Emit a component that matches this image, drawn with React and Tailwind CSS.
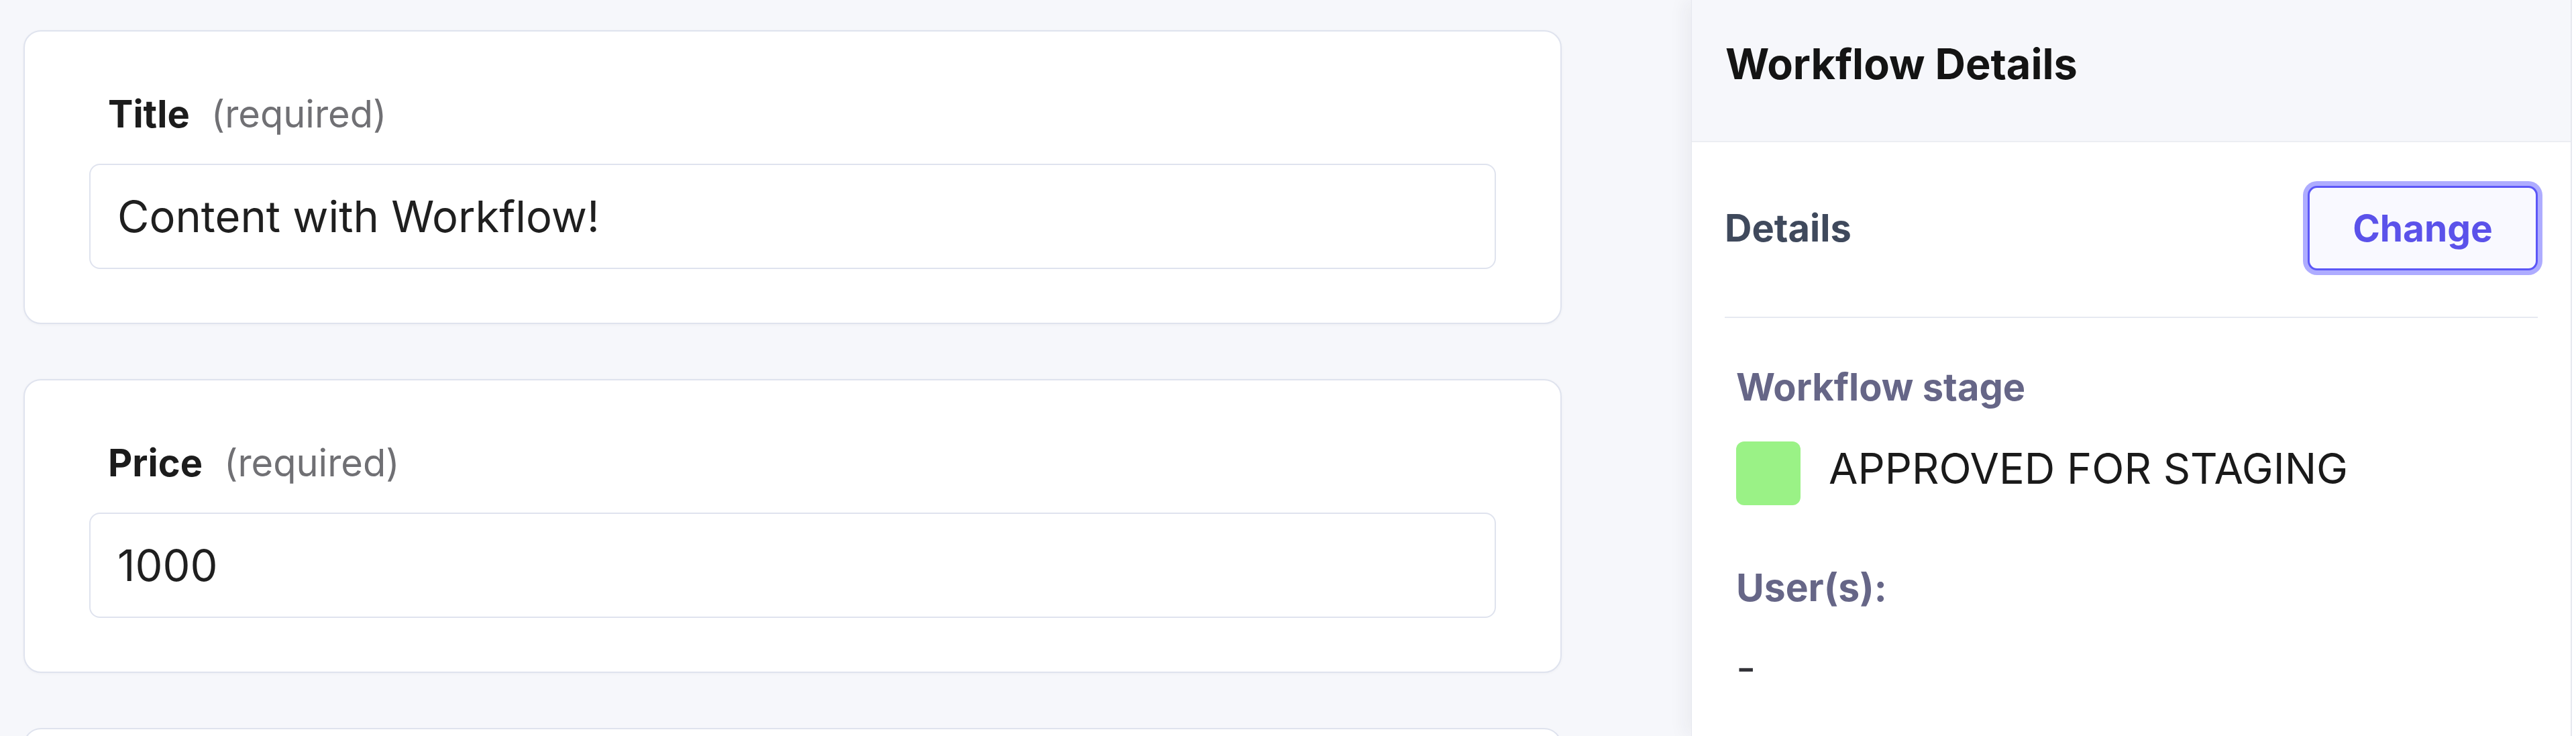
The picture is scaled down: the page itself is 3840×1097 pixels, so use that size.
import React from "react";

function FieldCard({ label, value }) {
  return (
    <div className="w-[2293px] shrink-0 rounded-[26px] border-2 border-[#dfe3ee] bg-white pl-[96px] pr-[96px] pt-[95px] pb-[80px] shadow-[0_1px_4px_rgba(33,33,52,0.04)]">
      <div className="ml-[28px] flex items-baseline leading-none">
        <span className="text-[56px] font-bold text-[#1c1c1c]">{label}</span>
        <span className="ml-[32px] text-[56px] font-normal text-[#707074]">(required)</span>
      </div>
      <div className="mt-[46px] flex h-[157px] items-center rounded-[16px] border-2 border-[#dfe3ee] bg-white pl-[40px]">
        <span className="text-[65px] leading-none text-[#1f1f1f]">{value}</span>
      </div>
    </div>
  );
}

export default function App() {
  return (
    <div className="flex h-[1097px] w-[3840px] overflow-hidden bg-[#f6f7fb] font-[Inter,sans-serif]">
      <div className="flex w-[2521px] shrink-0 flex-col gap-[82px] pl-[35px] pt-[45px]">
        <FieldCard label="Title" value="Content with Workflow!" />
        <FieldCard label="Price" value="1000" />
        <div className="h-[439px] w-[2293px] shrink-0 rounded-[26px] border-2 border-[#dfe3ee] bg-white" />
      </div>
      <div className="flex w-[1313px] shrink-0 flex-col border-l border-r-2 border-[#e6e8ef] bg-white shadow-[-10px_0_24px_rgba(33,33,52,0.05)]">
        <div className="h-[212px] shrink-0 border-b-2 border-[#eceef3] bg-[#f6f7fb] pl-[50px] pt-[64px]">
          <h2 className="text-[63px] font-bold leading-none text-[#141414]">Workflow Details</h2>
        </div>
        <div className="px-[49px] pt-[65px]">
          <div className="flex h-[126px] items-center justify-between">
            <span className="text-[56px] font-bold leading-none text-[#3f495c]">Details</span>
            <button className="flex h-[126px] w-[343px] items-center justify-center rounded-[14px] border-[3px] border-[#5c57f7] bg-[#f9f9ff] ring-[7px] ring-[#aeacff] text-[55px] font-bold leading-none text-[#5b52ea]">
              Change
            </button>
          </div>
          <div className="mt-[69px] h-[2px] bg-[#e6e9f1]" />
          <div className="pl-[17px] pt-[75px]">
            <div className="text-[56px] font-bold leading-none text-[#666687]">Workflow stage</div>
            <div className="mt-[53px] flex items-center">
              <div className="h-[95px] w-[96px] shrink-0 rounded-[12px] bg-[#9af286]" />
              <span className="ml-[42px] -translate-y-[7px] text-[63px] leading-none text-[#1a1a1a]">APPROVED FOR STAGING</span>
            </div>
            <div className="mt-[94px] text-[57px] font-bold leading-none text-[#666687]">User(s):</div>
            <div className="mt-[59px] text-[64px] leading-none text-[#333338]">-</div>
          </div>
        </div>
      </div>
      <div className="flex-1 bg-white" />
    </div>
  );
}
